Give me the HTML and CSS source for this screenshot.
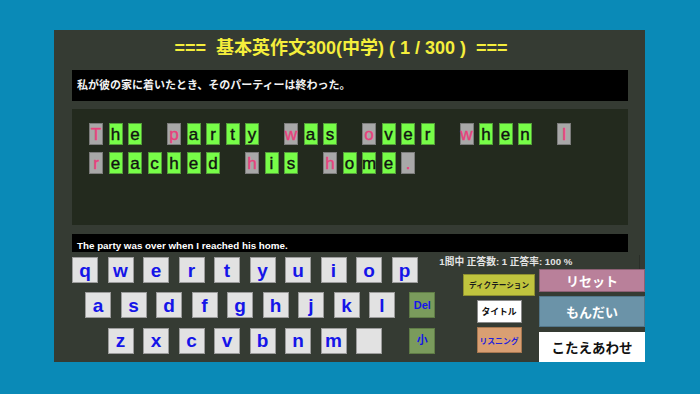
FILE: index.html
```html
<!DOCTYPE html>
<html lang="ja">
<head>
<meta charset="utf-8">
<title>基本英作文300(中学)</title>
<link rel="stylesheet" href="styles.css">
</head>
<body>
<div class="panel">
  <div class="title">===  基本英作文300(中学) ( 1 / 300 )  ===</div>
  <div class="sentence">私が彼の家に着いたとき、そのパーティーは終わった。</div>
  <div class="tiles">
    <div class="word"><span class="tile hint">T</span><span class="tile ok">h</span><span class="tile ok">e</span></div>
    <div class="word"><span class="tile hint">p</span><span class="tile ok">a</span><span class="tile ok">r</span><span class="tile ok">t</span><span class="tile ok">y</span></div>
    <div class="word"><span class="tile hint">w</span><span class="tile ok">a</span><span class="tile ok">s</span></div>
    <div class="word"><span class="tile hint">o</span><span class="tile ok">v</span><span class="tile ok">e</span><span class="tile ok">r</span></div>
    <div class="word"><span class="tile hint">w</span><span class="tile ok">h</span><span class="tile ok">e</span><span class="tile ok">n</span></div>
    <div class="word"><span class="tile hint">I</span></div>
    <div class="word"><span class="tile hint">r</span><span class="tile ok">e</span><span class="tile ok">a</span><span class="tile ok">c</span><span class="tile ok">h</span><span class="tile ok">e</span><span class="tile ok">d</span></div>
    <div class="word"><span class="tile hint">h</span><span class="tile ok">i</span><span class="tile ok">s</span></div>
    <div class="word"><span class="tile hint">h</span><span class="tile ok">o</span><span class="tile ok">m</span><span class="tile ok">e</span><span class="tile hint">.</span></div>
  </div>
  <div class="answer">The party was over when I reached his home.</div>
  <div class="bottom">
    <div class="keyboard">
      <div class="krow">
        <span class="key">q</span><span class="key">w</span><span class="key">e</span><span class="key">r</span><span class="key">t</span><span class="key">y</span><span class="key">u</span><span class="key">i</span><span class="key">o</span><span class="key">p</span>
      </div>
      <div class="krow r2">
        <span class="key">a</span><span class="key">s</span><span class="key">d</span><span class="key">f</span><span class="key">g</span><span class="key">h</span><span class="key">j</span><span class="key">k</span><span class="key">l</span><span class="key fn">Del</span>
      </div>
      <div class="krow r3">
        <span class="key">z</span><span class="key">x</span><span class="key">c</span><span class="key">v</span><span class="key">b</span><span class="key">n</span><span class="key">m</span><span class="key"></span><span class="key fn">小</span>
      </div>
    </div>
    <div class="side">
      <div class="stats">1問中 正答数: 1 正答率: 100 %</div>
      <div class="controls">
        <div class="smallcol">
          <div class="sbtn dict">ディクテーション</div>
          <div class="sbtn ttl">タイトル</div>
          <div class="sbtn listen">リスニング</div>
        </div>
        <div class="bigcol">
          <div class="bbtn reset">リセット</div>
          <div class="bbtn mondai">もんだい</div>
          <div class="bbtn check">こたえあわせ</div>
        </div>
      </div>
    </div>
  </div>
</div>
</body>
</html>
```

FILE: styles.css
```css
html, body {
  margin: 0;
  padding: 0;
}
body {
  width: 700px;
  height: 394px;
  background: #0a8ab7;
  font-family: "Liberation Sans", "Noto Sans CJK JP", sans-serif;
  overflow: hidden;
}
.panel {
  box-sizing: border-box;
  width: 591px;
  height: 332px;
  margin: 30px 0 0 54px;
  background: #353b33;
  display: flex;
  flex-direction: column;
}
.title {
  height: 40px;
  box-sizing: border-box;
  padding: 0 17px 8px 0;
  display: flex;
  align-items: center;
  justify-content: center;
  white-space: pre;
  color: #f4ee3c;
  font-weight: bold;
  font-size: 18px;
}
.sentence {
  height: 31px;
  box-sizing: border-box;
  margin: 0 17px 0 18px;
  padding: 0 0 3px 5px;
  background: #000;
  color: #f2f2f2;
  font-size: 11px;
  font-weight: bold;
  display: flex;
  align-items: center;
}
.tiles {
  height: 116px;
  box-sizing: border-box;
  margin: 8px 17px 0 18px;
  padding: 14px 17px;
  background: #232a1e;
  display: flex;
  flex-wrap: wrap;
  align-content: flex-start;
  column-gap: 25px;
  row-gap: 7px;
}
.word {
  display: flex;
  gap: 5.5px;
}
.tile {
  width: 14px;
  height: 22px;
  box-sizing: border-box;
  display: flex;
  align-items: center;
  justify-content: center;
  font-size: 17px;
  line-height: 1;
  -webkit-text-stroke: 0.4px currentColor;
}
.tile.ok {
  background: #77fd48;
  border: 1px solid #55a03a;
  color: #111;
}
.tile.hint {
  background: #a8a8a8;
  border: 1px solid #7c7c7c;
  color: #e8407c;
}
.answer {
  height: 18px;
  box-sizing: border-box;
  margin: 9px 17px 0 18px;
  padding: 0 0 1px 5px;
  background: #000;
  color: #fff;
  font-size: 9.8px;
  font-weight: bold;
  line-height: 11px;
  display: flex;
  align-items: flex-end;
}
.bottom {
  flex: 1;
  display: flex;
}
.keyboard {
  width: 364px;
  margin-left: 18px;
  padding-top: 5px;
  display: flex;
  flex-direction: column;
  gap: 9px;
}
.krow {
  display: flex;
  gap: 9.5px;
}
.krow.r2 {
  padding-left: 13px;
}
.krow.r3 {
  padding-left: 35.5px;
  margin-top: 0.5px;
}
.key {
  width: 26px;
  height: 26px;
  box-sizing: border-box;
  background: #e2e2e2;
  border: 1px solid #9c9c9c;
  color: #1515e8;
  font-weight: bold;
  font-size: 19px;
  display: flex;
  align-items: center;
  justify-content: center;
  line-height: 1;
}
.key.fn {
  margin-left: auto;
  background: #7a9b5c;
  border-color: #5f7c46;
  font-size: 11px;
}
.side {
  width: 206px;
  margin-left: 4px;
  display: flex;
  flex-direction: column;
}
.stats {
  height: 14px;
  margin-top: 3px;
  margin-right: 5px;
  border-right: 1px solid #2b2f29;
  color: #e4e4e4;
  font-size: 9.7px;
  font-weight: bold;
  line-height: 14px;
  white-space: nowrap;
}
.controls {
  display: flex;
  justify-content: flex-end;
  gap: 4px;
  margin-top: 0.3px;
}
.smallcol {
  width: 72px;
  padding-top: 4.7px;
  display: flex;
  flex-direction: column;
  align-items: center;
}
.sbtn {
  box-sizing: border-box;
  display: flex;
  align-items: center;
  justify-content: center;
  font-weight: bold;
  white-space: nowrap;
}
.sbtn.dict {
  width: 72px;
  height: 22px;
  background: #c0c43e;
  border: 1px solid #8e9030;
  color: #1a1a1a;
  font-size: 7.6px;
}
.sbtn.ttl {
  width: 45px;
  height: 22.7px;
  margin-top: 4px;
  background: #fff;
  border: 1px solid #8a8a8a;
  color: #111;
  font-size: 8.8px;
}
.sbtn.listen {
  width: 45px;
  height: 26px;
  margin-top: 4.6px;
  background: #d99f72;
  border: 1px solid #a87750;
  color: #2222dd;
  font-size: 7.8px;
}
.bigcol {
  width: 106px;
  display: flex;
  flex-direction: column;
}
.bbtn {
  box-sizing: border-box;
  display: flex;
  align-items: center;
  justify-content: center;
  font-size: 13px;
  font-weight: bold;
  white-space: nowrap;
}
.bbtn.reset {
  height: 22.4px;
  background: #b9809a;
  border: 1px solid #8c6074;
  color: #fff;
}
.bbtn.mondai {
  height: 31.3px;
  margin-top: 4.3px;
  background: #6b93a8;
  border: 1px solid #52768a;
  color: #fff;
}
.bbtn.check {
  height: 30.3px;
  margin-top: 4.4px;
  background: #fff;
  color: #111;
  font-size: 13.5px;
}
```
